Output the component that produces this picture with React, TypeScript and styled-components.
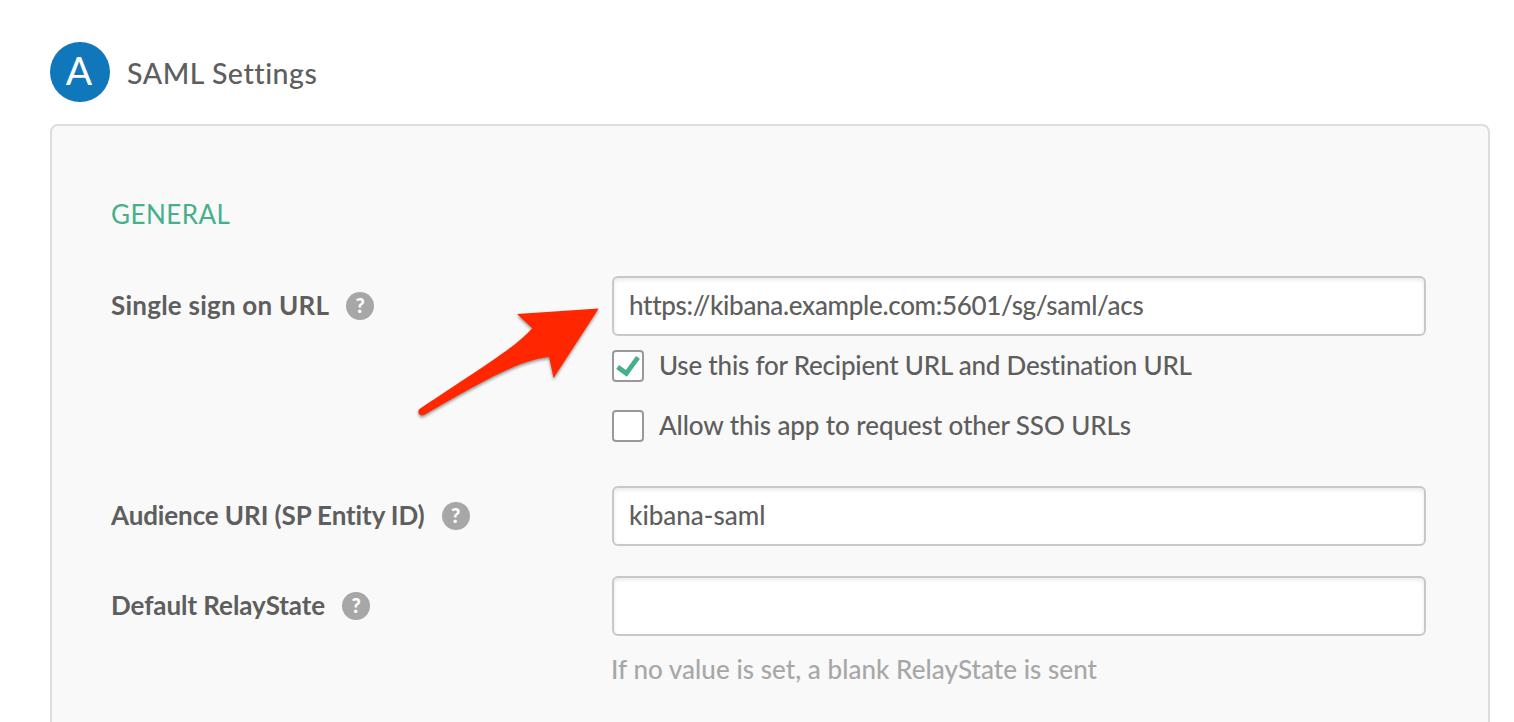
import React from "react";
import styled, { createGlobalStyle } from "styled-components";

const GlobalStyle = createGlobalStyle`
  * { box-sizing: border-box; }
  body {
    margin: 0;
    background: #fff;
    color: #5e5e5e;
    font-family: Lato, "Liberation Sans", sans-serif;
    font-size: 26px;
    font-variant-ligatures: none;
    line-height: 30px;
    overflow: hidden;
  }
`;

const Page = styled.main`
  height: 722px;
  padding: 42px 24px 0 50px;
  overflow: hidden;
  position: relative;
`;

const Header = styled.header`
  display: flex;
  align-items: center;
  gap: 17px;
  height: 60px;
`;

const StepBadge = styled.span`
  width: 60px;
  height: 60px;
  padding-right: 2px;
  border-radius: 50%;
  background: #1077bb;
  color: #fff;
  font-size: 39px;
  line-height: 56px;
  text-align: center;
`;

const Title = styled.h1<{ $spacing: number }>`
  margin: 2px 0 0;
  font-size: 28.5px;
  font-weight: 500;
  line-height: 36px;
  letter-spacing: ${(p) => p.$spacing}px;
`;

const Panel = styled.section`
  margin-top: 22px;
  height: 700px;
  padding: 73px 62px 0 59px;
  border: 2px solid #dddddd;
  border-radius: 8px;
  background: #f9f9f9;
`;

const SectionTitle = styled.h2<{ $spacing: number }>`
  margin: 0 0 47px;
  color: #46b08c;
  font-size: 26px;
  font-weight: 400;
  line-height: 30px;
  letter-spacing: ${(p) => p.$spacing}px;
`;

const Field = styled.div<{ $gap: number }>`
  display: grid;
  grid-template-columns: 501px 814px;
  margin-bottom: ${(p) => p.$gap}px;
`;

const LabelCell = styled.div`
  display: flex;
  align-items: center;
  gap: 17px;
  height: 60px;
`;

const Label = styled.label<{ $spacing: number }>`
  padding-bottom: 2px;
  font-weight: 700;
  letter-spacing: ${(p) => p.$spacing}px;
  white-space: nowrap;
`;

const HelpIcon = styled.span`
  width: 28px;
  height: 28px;
  border-radius: 50%;
  background: #a7a7a7;
  color: #fff;
  font-size: 20px;
  font-weight: 900;
  line-height: 27px;
  text-align: center;
`;

const TextBox = styled.div<{ $spacing?: number }>`
  height: 60px;
  padding: 12px 15px;
  border: 2px solid #c8c8c8;
  border-radius: 6px;
  background: #fff;
  box-shadow: inset 0 2px 4px rgba(0, 0, 0, 0.09);
  font-weight: 500;
  letter-spacing: ${(p) => p.$spacing ?? 0}px;
`;

const CheckRow = styled.div<{ $spacing: number }>`
  display: flex;
  align-items: center;
  gap: 15px;
  height: 32px;
  margin-top: 14px;
  font-weight: 500;
  letter-spacing: ${(p) => p.$spacing}px;

  & + & {
    margin-top: 28px;
  }
`;

const CheckText = styled.span`
  padding-bottom: 2px;
`;

const CheckBox = styled.span`
  width: 32px;
  height: 32px;
  flex: none;
  border: 2px solid #999;
  border-radius: 4px;
  background: #fff;
`;

const CheckMark = styled.svg`
  display: block;
`;

const Hint = styled.p<{ $spacing: number }>`
  margin: 18px 0 0 -1px;
  color: #a7a7a7;
  font-weight: 500;
  letter-spacing: ${(p) => p.$spacing}px;
`;

const Pointer = styled.svg`
  position: absolute;
  left: 410px;
  top: 300px;
  filter: drop-shadow(0 2px 1.5px rgba(0, 0, 0, 0.4));
`;

export default function App() {
  return (
    <>
      <GlobalStyle />
      <Page>
        <Header>
          <StepBadge>A</StepBadge>
          <Title $spacing={0.55}>SAML Settings</Title>
        </Header>
        <Panel>
          <SectionTitle $spacing={0.45}>GENERAL</SectionTitle>
          <Field $gap={44}>
            <LabelCell>
              <Label $spacing={0.23}>Single sign on URL</Label>
              <HelpIcon>?</HelpIcon>
            </LabelCell>
            <div>
              <TextBox $spacing={-0.31}>https://kibana.example.com:5601/sg/saml/acs</TextBox>
              <CheckRow $spacing={-0.21}>
                <CheckBox>
                  <CheckMark width="28" height="28" viewBox="0 0 28 28">
                    <path d="M3.600 15 L12.3 21.3 L24 5.3" fill="none" stroke="#46b08c" strokeWidth="4.8" />
                  </CheckMark>
                </CheckBox>
                <CheckText>Use this for Recipient URL and Destination URL</CheckText>
              </CheckRow>
              <CheckRow $spacing={-0.09}>
                <CheckBox />
                <CheckText>Allow this app to request other SSO URLs</CheckText>
              </CheckRow>
            </div>
          </Field>
          <Field $gap={30}>
            <LabelCell>
              <Label $spacing={-0.11}>Audience URI (SP Entity ID)</Label>
              <HelpIcon>?</HelpIcon>
            </LabelCell>
            <TextBox $spacing={0}>kibana-saml</TextBox>
          </Field>
          <Field $gap={0}>
            <LabelCell>
              <Label $spacing={-0.07}>Default RelayState</Label>
              <HelpIcon>?</HelpIcon>
            </LabelCell>
            <div>
              <TextBox />
              <Hint $spacing={0.05}>If no value is set, a blank RelayState is sent</Hint>
            </div>
          </Field>
        </Panel>
        <Pointer width="200" height="125" viewBox="410 300 200 125">
          <path
            d="M598.7 308.4 L517 314 L532.3 328.2 C516 346 495 359 419.5 409 C416.5 412 419.5 417 424 415 C468 390 516 360 549 357 L553.6 378 Z"
            fill="#ff2600"
          />
        </Pointer>
      </Page>
    </>
  );
}
